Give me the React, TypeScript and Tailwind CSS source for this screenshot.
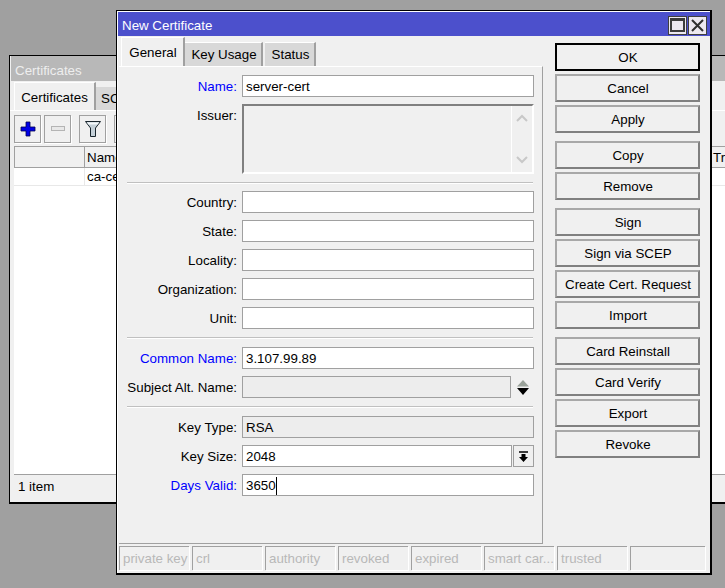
import React from "react";

const FONT = "[font-family:'Liberation_Sans',Arial,sans-serif]";

function Btn({ label, strong }: { label: string; strong?: boolean }) {
  return (
    <div
      className={`h-[28px] w-[145px] flex items-center justify-center pt-px pl-px text-[#000] bg-[#f0f0f0] border-2 ${
        strong ? "border-black" : "border-t-[#a8a8a8] border-l-[#a8a8a8] border-r-[#808080] border-b-[#808080]"
      }`}
    >
      {label}
    </div>
  );
}

function Row({
  label,
  blue,
  children,
}: {
  label: string;
  blue?: boolean;
  children: React.ReactNode;
}) {
  return (
    <div className="flex h-[22px] items-center">
      <div className={`w-[122px] pr-[5px] pt-px text-right whitespace-nowrap shrink-0 ${blue ? "text-[#0000ff]" : "text-[#000]"}`}>
        {label}
      </div>
      {children}
    </div>
  );
}

function Field({
  value,
  disabled,
  w = "w-[292px]",
  caret,
}: {
  value?: string;
  disabled?: boolean;
  w?: string;
  caret?: boolean;
}) {
  return (
    <div
      className={`${w} h-[22px] border border-[#a0a0a0] pl-[3px] pt-px flex items-center shrink-0 ${
        disabled ? "bg-[#ededed]" : "bg-white"
      }`}
    >
      <span>{value}</span>
      {caret && <span className="inline-block w-px h-[18px] bg-black" />}
    </div>
  );
}

function Sep() {
  return <div className="h-[2px] bg-[#c0c0c0] border-b border-white ml-[7px] w-[406px]" />;
}

function Status({ label, w = "w-[70px]" }: { label?: string; w?: string }) {
  return (
    <div className={`${w} h-[24px] border-l border-t border-[#a0a0a0] pl-[3px] flex items-center text-[#b8b8b8] whitespace-nowrap overflow-hidden shrink-0 shadow-[1px_1px_0_#fff]`}>
      {label}
    </div>
  );
}

function Tab({ label, active, w }: { label: string; active?: boolean; w: string }) {
  return active ? (
    <div className={`${w} h-[29px] bg-[#f0f0f0] border-t border-l border-white border-r-2 border-r-[#a0a0a0] flex items-center justify-center pt-px pl-px`}>
      {label}
    </div>
  ) : (
    <div className={`${w} h-[24px] bg-[#d8d8d8] border-t border-t-white border-r-2 border-r-[#a0a0a0] flex items-center justify-center pl-[2px]`}>
      {label}
    </div>
  );
}

function ToolBtn({ children }: { children?: React.ReactNode }) {
  return (
    <div className="w-[27px] h-[28px] border border-[#a0a0a0] shadow-[1px_1px_0_#fff] bg-[#f0f0f0] flex items-center justify-center shrink-0">
      {children}
    </div>
  );
}

export default function App() {
  return (
    <div className={`relative w-[725px] h-[588px] overflow-hidden bg-[#a0a0a0] text-[13.33px] leading-none ${FONT}`}>
      {/* Background window */}
      <div className="absolute left-[9px] top-[55px] w-[800px] h-[449px] border-2 border-black border-t border-l bg-[#f0f0f0] flex flex-col">
        <div className="h-[25px] bg-[#b8b8b8] text-[#eeeeee] flex items-center pl-[4px] pt-[4px] shrink-0 ml-px">Certificates</div>
        <div className="flex items-end h-[30px] pl-[4px] border-b border-white shrink-0">
          <div className="w-[82px] h-[28px] bg-[#f0f0f0] border-t border-l border-white border-r-2 border-r-[#a0a0a0] flex items-center justify-center pt-[2px]">
            Certificates
          </div>
          <div className="w-[60px] h-[23px] bg-[#d8d8d8] flex items-center pl-[5px]">SCEP</div>
        </div>
        <div className="flex h-[35px] items-center pl-[4px] gap-[3px] shrink-0">
          <ToolBtn>
            <svg width="16" height="16" viewBox="0 0 16 16">
              <path d="M6 1h4v5h5v4h-5v5H6v-5H1V6h5z" fill="#0000e6" stroke="#000050" strokeWidth="0.8" />
            </svg>
          </ToolBtn>
          <ToolBtn>
            <svg width="16" height="8" viewBox="0 0 16 8">
              <rect x="1.5" y="1.5" width="13" height="4" fill="#e8e8e8" stroke="#b4b4b4" />
            </svg>
          </ToolBtn>
          <div className="w-[2px]" />
          <ToolBtn>
            <svg width="16" height="17" viewBox="0 0 16 17">
              <path d="M0.5 1.5h15l-5 6.5v8.5h-5V8z" fill="#c4d0d8" stroke="#18242c" strokeWidth="1" />
              <path d="M2 2.5h12l-1.5 2h-9z" fill="#f4f8fa" />
            </svg>
          </ToolBtn>
          <div className="w-[2px]" />
          <ToolBtn />
        </div>
        <div className="flex-1 mx-[4px] bg-white border-t border-[#a0a0a0] flex flex-col min-h-0">
          <div className="h-[21px] flex bg-[#f0f0f0] border-b border-[#a0a0a0] shrink-0">
            <div className="w-[71px] border-r border-[#a0a0a0] border-l" />
            <div className="w-[627px] pl-[2px] pt-px flex items-center border-r border-[#a0a0a0]">Name</div>
            <div className="pl-[1px] pt-px flex items-center">Trust</div>
          </div>
          <div className="h-[18px] flex border-b border-[#e8e8e8] shrink-0">
            <div className="w-[71px] border-r border-[#e8e8e8]" />
            <div className="pl-[2px] flex items-center">ca-cert</div>
          </div>
        </div>
        <div className="h-[25px] mx-[4px] border-t border-[#a0a0a0] flex items-center pl-[4px] mb-[3px] shrink-0">1 item</div>
      </div>

      {/* New Certificate window */}
      <div className="absolute left-[116px] top-[10px] w-[596px] h-[565px] border-2 border-black bg-[#f0f0f0] border-t border-l shadow-[inset_1px_1px_0_#fff] flex flex-col">
        <div className="h-[24px] mt-px ml-px bg-[#4c50cc] text-white flex items-center pl-[4px] justify-between shrink-0">
          <span className="pt-[3px]">New Certificate</span>
          <div className="flex gap-px pr-[3px] mt-[2px]">
            <div className="w-[19px] h-[19px] bg-[#ece8f0] border border-[#404040] flex items-center justify-center">
              <div className="w-[15px] h-[14px] border-2 border-t-[3px] border-[#3c3c3c]" />
            </div>
            <div className="w-[19px] h-[19px] bg-[#ece8f0] border border-[#404040] flex items-center justify-center">
              <svg width="13" height="13" viewBox="0 0 13 13">
                <path d="M1 1l11 11M12 1L1 12" stroke="#303030" strokeWidth="2" />
              </svg>
            </div>
          </div>
        </div>

        <div className="flex flex-1 min-h-0 ml-[2px]">
          {/* Left pane */}
          <div className="w-[424px] shrink-0 flex flex-col">
            <div className="flex items-end h-[30px] pl-[2px] shrink-0">
              <Tab label="General" active w="w-[64px]" />
              <Tab label="Key Usage" w="w-[78px]" />
              <div className="w-[2px]" />
              <Tab label="Status" w="w-[51px]" />
            </div>
            <div className="h-[478px] border-r border-b border-[#a0a0a0] border-t-white border-t flex flex-col pt-[8px] pl-px relative">
              <div className="flex flex-col gap-[7px]">
                <Row label="Name:" blue>
                  <Field value="server-cert" />
                </Row>
                <div className="flex h-[70px]">
                  <div className="w-[122px] pr-[5px] pt-[5px] text-right shrink-0">Issuer:</div>
                  <div className="w-[292px] h-[70px] border-2 border-t-[#808080] border-l-[#808080] border-r-white border-b-white flex justify-end">
                    <div className="w-[21px] border-l border-white flex flex-col items-center justify-between py-[8px]">
                      <svg width="12" height="8" viewBox="0 0 12 8">
                        <path d="M1 7l5-5 5 5" fill="none" stroke="#c8c8c8" strokeWidth="2" />
                      </svg>
                      <svg width="12" height="8" viewBox="0 0 12 8">
                        <path d="M1 1l5 5 5-5" fill="none" stroke="#c8c8c8" strokeWidth="2" />
                      </svg>
                    </div>
                  </div>
                </div>
              </div>
              <div className="mt-[8px] mb-[7px]">
                <Sep />
              </div>
              <div className="flex flex-col gap-[7px]">
                <Row label="Country:"><Field /></Row>
                <Row label="State:"><Field /></Row>
                <Row label="Locality:"><Field /></Row>
                <Row label="Organization:"><Field /></Row>
                <Row label="Unit:"><Field /></Row>
              </div>
              <div className="mt-[8px] mb-[8px]">
                <Sep />
              </div>
              <div className="flex flex-col gap-[7px]">
                <Row label="Common Name:" blue><Field value="3.107.99.89" /></Row>
                <Row label="Subject Alt. Name:">
                  <Field disabled w="w-[269px]" />
                  <div className="w-[23px] flex justify-center">
                    <svg width="12" height="15" viewBox="0 0 12 15">
                      <path d="M6 0L12 6.5H0z" fill="#9aa29a" />
                      <path d="M0 8h12L6 15z" fill="#000" />
                    </svg>
                  </div>
                </Row>
              </div>
              <div className="mt-[8px] mb-[8px]">
                <Sep />
              </div>
              <div className="flex flex-col gap-[7px]">
                <Row label="Key Type:"><Field disabled value="RSA" /></Row>
                <Row label="Key Size:">
                  <Field value="2048" w="w-[270px]" />
                  <div className="ml-px w-[21px] h-[22px] border border-[#a0a0a0] flex items-center justify-center">
                    <svg width="11" height="11" viewBox="0 0 11 11">
                      <path d="M1 1h9" stroke="#000" strokeWidth="1.5" />
                      <path d="M3.5 3h4v3H10l-4.5 5L1 6h2.5z" fill="#000" />
                    </svg>
                  </div>
                </Row>
                <Row label="Days Valid:" blue><Field value="3650" caret /></Row>
              </div>
            </div>
          </div>

          {/* Buttons */}
          <div className="flex flex-col pt-[7px] pl-[12px] gap-[8px]">
            <div className="flex flex-col gap-[3px]">
              <Btn label="OK" strong />
              <Btn label="Cancel" />
              <Btn label="Apply" />
            </div>
            <div className="flex flex-col gap-[3px]">
              <Btn label="Copy" />
              <Btn label="Remove" />
            </div>
            <div className="flex flex-col gap-[3px]">
              <Btn label="Sign" />
              <Btn label="Sign via SCEP" />
              <Btn label="Create Cert. Request" />
              <Btn label="Import" />
            </div>
            <div className="flex flex-col gap-[3px]">
              <Btn label="Card Reinstall" />
              <Btn label="Card Verify" />
              <Btn label="Export" />
              <Btn label="Revoke" />
            </div>
          </div>
        </div>

        {/* Status bar */}
        <div className="flex gap-[3px] pl-[2px] pb-[3px] shrink-0">
          <Status label="private key" />
          <Status label="crl" />
          <Status label="authority" />
          <Status label="revoked" />
          <Status label="expired" />
          <Status label="smart car..." />
          <Status label="trusted" />
          <Status w="w-[75px]" />
        </div>
      </div>
    </div>
  );
}
